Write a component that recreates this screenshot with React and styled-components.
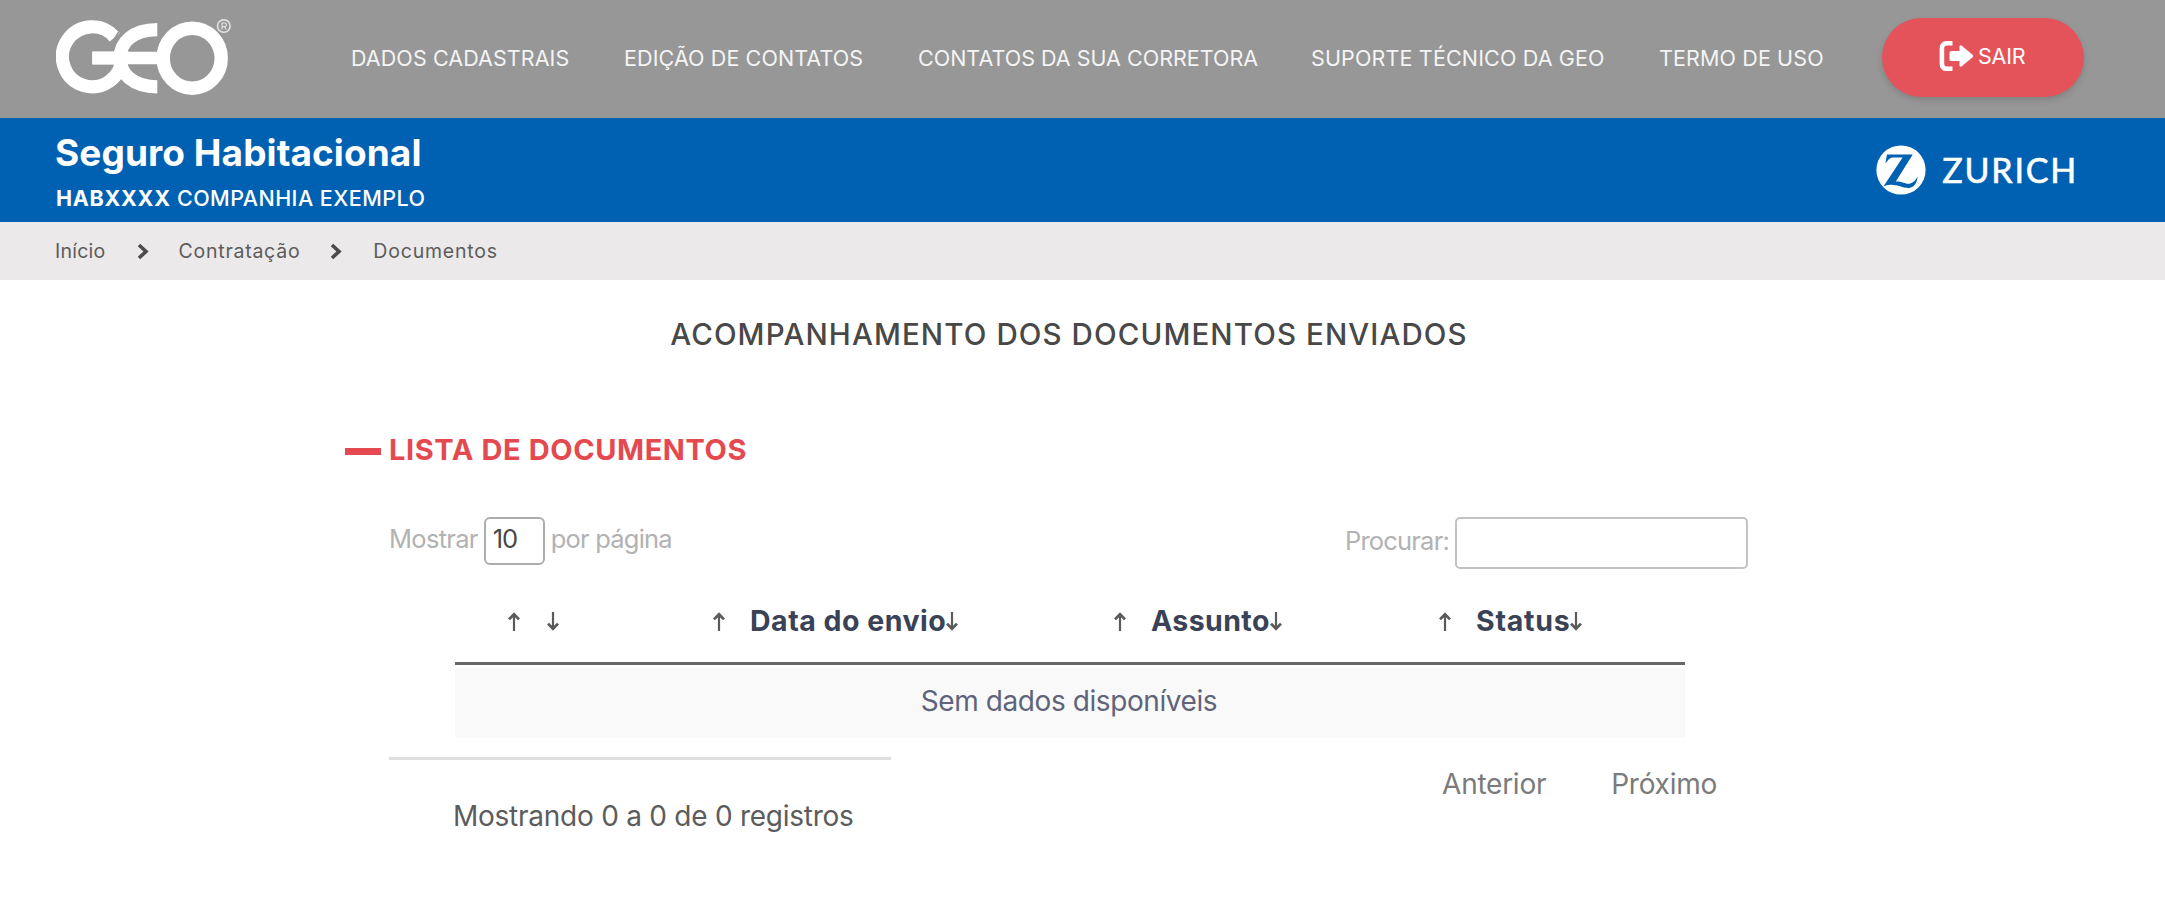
import React from "react";
import styled, { createGlobalStyle } from "styled-components";

const GlobalStyle = createGlobalStyle`
  *, *::before, *::after { box-sizing: border-box; }
  body {
    margin: 0;
    background: #fff;
    font-family: Inter, "Liberation Sans", sans-serif;
    color: #4a4a4a;
  }
`;

const Page = styled.div`
  min-height: 916px;
  background: #fff;
`;

const Text = styled.span`
  white-space: nowrap;
  letter-spacing: ${(p) => p.$ls || 0}px;
`;

const TopBar = styled.header`
  display: flex;
  align-items: flex-start;
  height: 118px;
  padding-left: 56px;
  background: #979797;
  color: #f4f4f4;
`;

const GeoLogo = styled.svg`
  display: block;
  width: 176px;
  height: 118px;
  flex: none;
`;

const Nav = styled.nav`
  display: flex;
  width: 1532px;
  margin-left: 119px;
  padding-top: 44px;
`;

const NavLink = styled.a`
  width: ${(p) => p.$w}px;
  flex: none;
  font-size: 21.5px;
  line-height: 29px;
  white-space: nowrap;
  letter-spacing: ${(p) => p.$ls || 0}px;
`;

const ExitButton = styled.button`
  display: flex;
  align-items: center;
  gap: 4px;
  width: 202px;
  height: 79px;
  margin: 18px 0 0 -1px;
  padding: 0 0 3px 57px;
  border: 0;
  border-radius: 40px;
  background: #e5535a;
  box-shadow: 0 3px 6px rgba(0, 0, 0, 0.14);
  color: #fff;
  font: 400 21.5px/30px Inter, sans-serif;
  flex: none;
`;

const Brand = styled.section`
  display: flex;
  justify-content: space-between;
  height: 104px;
  padding: 14px 87px 0 55px;
  background: #0061b3;
  color: #fff;
`;

const Product = styled.h1`
  margin: 0;
  font-size: 37px;
  line-height: 42px;
  font-weight: 700;
  letter-spacing: 0.08px;
`;

const Company = styled.p`
  margin: 11px 0 0 1px;
  font-size: 21.5px;
  line-height: 27px;
  font-weight: 500;
  letter-spacing: 0.45px;

  b {
    font-weight: 700;
    letter-spacing: 0.7px;
  }
`;

const Insurer = styled.div`
  display: flex;
  align-items: center;
  gap: 16px;
  height: 76px;
  font: 400 34px/40px Lato, sans-serif;
  letter-spacing: 1.8px;
  -webkit-text-stroke: 0.6px #fff;
`;

const Crumbs = styled.nav`
  display: flex;
  align-items: center;
  height: 58px;
  padding: 0 0 0 55px;
  background: #ebe9e9;
  color: #5c5c5c;
  font-size: 19.5px;
  line-height: 28px;
`;

const Chevron = styled.svg`
  width: 12px;
  height: 17px;
  margin: 0 ${(p) => p.$right}px 0 ${(p) => p.$left}px;
`;

const Heading = styled.h2`
  margin: 0;
  padding: 36px 27px 0 0;
  text-align: center;
  font-size: 29.5px;
  line-height: 36px;
  font-weight: 500;
  letter-spacing: 1.1px;
  color: #484848;
`;

const Content = styled.main`
  width: 1404px;
  margin: 80px 0 0 345px;
`;

const SectionTitle = styled.h3`
  display: flex;
  align-items: center;
  gap: 8px;
  margin: 0;
  font-size: 29px;
  line-height: 36px;
  font-weight: 700;
  letter-spacing: 0.6px;
  color: #e54950;

  &::before {
    content: "";
    width: 36px;
    height: 7px;
    margin-top: 3px;
    background: #e54950;
  }
`;

const Controls = styled.div`
  display: flex;
  justify-content: space-between;
  height: 52px;
  margin: 49px 1px 0 44px;
  font-size: 25.5px;
  font-weight: 400;
  color: #b2b2b2;
`;

const Length = styled.label`
  display: flex;
  gap: 6px;
  line-height: 44px;
`;

const LengthBox = styled.span`
  width: 61px;
  height: 48px;
  padding-left: 7px;
  border: 2px solid #adadad;
  border-radius: 6px;
  line-height: 40px;
  letter-spacing: -1px;
  color: #484848;
`;

const Search = styled.label`
  display: flex;
  gap: 6px;
  line-height: 48px;
`;

const SearchInput = styled.input`
  width: 293px;
  height: 52px;
  padding: 0 10px;
  border: 2px solid #c2c2c2;
  border-radius: 5px;
  background: #fff;
`;

const Table = styled.div`
  width: 1230px;
  margin-left: 110px;
`;

const TableHead = styled.div`
  display: flex;
  height: 96px;
  padding-top: 32px;
  border-bottom: 3px solid #676767;
`;

const HeadCell = styled.div`
  display: flex;
  align-items: center;
  width: ${(p) => p.$w}px;
  height: 38px;
  flex: none;
  font-size: 28.5px;
  font-weight: 700;
  color: #3a4356;

  &:first-child {
    margin-left: 53px;
  }
`;

const Label = styled.span`
  margin-left: 25px;
  min-width: 2px;
  white-space: nowrap;
  letter-spacing: ${(p) => p.$ls || 0}px;
`;

const Arrow = styled.svg`
  width: 12px;
  height: 19px;
  margin-top: 3px;
  flex: none;
  transform: ${(p) => (p.$down ? "rotate(180deg)" : "none")};
`;

const EmptyRow = styled.div`
  height: 70px;
  margin-top: 3px;
  padding: 0 2px 0 0;
  background: #f9f9f9;
  text-align: center;
  font-size: 28px;
  line-height: 66px;
  letter-spacing: -0.42px;
  color: #60647a;
`;

const Footer = styled.div`
  display: flex;
  justify-content: space-between;
  margin: 19px 0 0 44px;
  font-size: 28px;
  letter-spacing: -0.25px;
`;

const Info = styled.div`
  width: 502px;
  padding: 38px 0 0 64px;
  border-top: 3px solid #dedede;
  line-height: 36px;
  white-space: nowrap;
  color: #5c5c5c;
`;

const Pager = styled.div`
  display: flex;
  gap: 65px;
  padding: 9px 32px 0 0;
  line-height: 36px;
  color: #7b7b7b;
`;

const NAV = [
  { label: "DADOS CADASTRAIS", w: 273, ls: 0.08 },
  { label: "EDIÇÃO DE CONTATOS", w: 294, ls: 0.1 },
  { label: "CONTATOS DA SUA CORRETORA", w: 393, ls: 0.01 },
  { label: "SUPORTE TÉCNICO DA GEO", w: 348, ls: 0.15 },
  { label: "TERMO DE USO", w: 170, ls: 0.12 },
];

const COLUMNS = [
  { label: "", w: 205 },
  { label: "Data do envio", w: 401, ls: 0.5 },
  { label: "Assunto", w: 325, ls: 0.4 },
  { label: "Status", w: 200, ls: 0.75 },
];

function Logo() {
  return (
    <GeoLogo viewBox="56 0 176 118" fill="none" stroke="#fff" aria-label="GEO">
      <path d="M114.8 37.2A29.8 30 0 1 0 122 58H92.3" strokeWidth="13.2" />
      <path d="M157.3 29.6C132 29.6 120 43 120 58C120 73 132 86.8 157.3 86.8" strokeWidth="13.2" />
      <path d="M92.3 58H162" strokeWidth="12.6" />
      <ellipse cx="192.2" cy="58.2" rx="29" ry="30" strokeWidth="13.4" />
      <path d="M119.2 31.5C115.5 36 113.4 40 112.4 45.5" stroke="#979797" strokeWidth="1.6" />
      <circle cx="223.8" cy="26" r="6.3" stroke="#e6e6e6" strokeWidth="1.5" />
      <path d="M222 29.5V23H224.6A1.7 1.7 0 0 1 224.6 26.6H222M224.4 26.6L226.3 29.5" stroke="#e6e6e6" strokeWidth="1.1" />
    </GeoLogo>
  );
}

function ExitIcon() {
  return (
    <svg width="35" height="30" viewBox="0 0 35 30" fill="none">
      <path d="M13.5 2.3H8Q2.9 2.3 2.9 7.6V22.4Q2.9 27.7 8 27.7H13.5" stroke="#fff" strokeWidth="4.6" />
      <path d="M12 10H20.5V5.6Q21 3.6 22.8 4.8L33.6 13.7Q34.8 15 33.6 16.3L22.8 25.2Q21 26.4 20.5 24.4V20H12Q10.5 20 10.5 18.5V11.5Q10.5 10 12 10Z" fill="#fff" />
    </svg>
  );
}

function ZurichMark() {
  return (
    <svg width="50" height="50" viewBox="0 0 50 50" stroke="none">
      <circle cx="25" cy="25" r="24.6" fill="#fff" />
      <path
        d="M11 9.5H36.8L19.8 36.4C27 36.2 30 39.6 34.4 38.4C38 37.4 40 34.6 41.6 31.6C41 38.6 37.8 43 32.4 43C26 43 22 39.4 14 39.8C11.4 40 9.4 40.6 7.4 41.6L26.6 12.4H18.5C13.8 12.4 12.4 14.2 9.4 18.6Z"
        fill="#0061b3"
      />
    </svg>
  );
}

function Separator({ left, right }) {
  return (
    <Chevron $left={left} $right={right} viewBox="0 0 12 17" fill="none">
      <path d="M2 2L9 8.5L2 15" stroke="#4b4b4b" strokeWidth="3.6" />
    </Chevron>
  );
}

function SortArrow({ down }) {
  return (
    <Arrow $down={down} viewBox="0 0 12 19" fill="none" stroke="#5a5a5a">
      <path d="M6 19V2.5" strokeWidth="2.2" />
      <path d="M1 7.4L6 2.2L11 7.4" strokeWidth="2.8" />
    </Arrow>
  );
}

export default function App() {
  return (
    <Page>
      <GlobalStyle />
      <TopBar>
        <Logo />
        <Nav>
          {NAV.map((n) => (
            <NavLink key={n.label} $w={n.w} $ls={n.ls}>
              {n.label}
            </NavLink>
          ))}
        </Nav>
        <ExitButton>
          <ExitIcon />
          <Text $ls={-0.2}>SAIR</Text>
        </ExitButton>
      </TopBar>
      <Brand>
        <div>
          <Product>Seguro Habitacional</Product>
          <Company>
            <b>HABXXXX</b> COMPANHIA EXEMPLO
          </Company>
        </div>
        <Insurer>
          <ZurichMark />
          <span>ZURICH</span>
        </Insurer>
      </Brand>
      <Crumbs>
        <Text $ls={0.25}>Início</Text>
        <Separator left={31} right={30} />
        <Text $ls={0.75}>Contratação</Text>
        <Separator left={30} right={31} />
        <Text $ls={0.8}>Documentos</Text>
      </Crumbs>
      <Heading>ACOMPANHAMENTO DOS DOCUMENTOS ENVIADOS</Heading>
      <Content>
        <SectionTitle>LISTA DE DOCUMENTOS</SectionTitle>
        <Controls>
          <Length>
            <Text $ls={-0.7}>Mostrar</Text>
            <LengthBox>10</LengthBox>
            <Text $ls={-0.8}>por página</Text>
          </Length>
          <Search>
            <Text $ls={-0.8}>Procurar:</Text>
            <SearchInput />
          </Search>
        </Controls>
        <Table>
          <TableHead>
            {COLUMNS.map((c, i) => (
              <HeadCell key={i} $w={c.w}>
                <SortArrow />
                <Label $ls={c.ls}>{c.label}</Label>
                <SortArrow down />
              </HeadCell>
            ))}
          </TableHead>
          <EmptyRow>Sem dados disponíveis</EmptyRow>
        </Table>
        <Footer>
          <Info>Mostrando 0 a 0 de 0 registros</Info>
          <Pager>
            <span>Anterior</span>
            <span>Próximo</span>
          </Pager>
        </Footer>
      </Content>
    </Page>
  );
}
